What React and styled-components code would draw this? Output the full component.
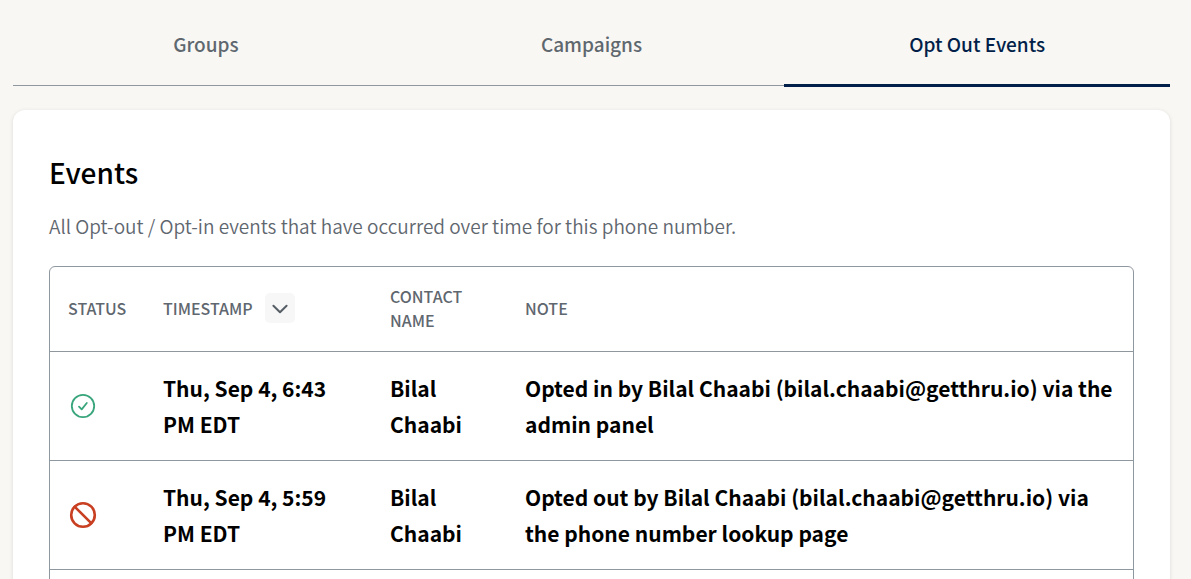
import React, { useState } from 'react';
import styled, { createGlobalStyle } from 'styled-components';

const tabs = ['Groups', 'Campaigns', 'Opt Out Events'];

const events = [
  {
    id: 1,
    optedIn: true,
    time: 'Thu, Sep 4, 6:43 PM EDT',
    contact: 'Bilal Chaabi',
    note: 'Opted in by Bilal Chaabi (bilal.chaabi@getthru.io) via the admin panel',
  },
  {
    id: 2,
    optedIn: false,
    time: 'Thu, Sep 4, 5:59 PM EDT',
    contact: 'Bilal Chaabi',
    note: 'Opted out by Bilal Chaabi (bilal.chaabi@getthru.io) via the phone number lookup page',
  },
];

const OptedInIcon = () => (
  <StatusIcon viewBox="0 0 30 30" role="img" aria-label="Opted in" $color="#38a57c">
    <circle cx="15" cy="15" r="11.2" strokeWidth="1.8" />
    <path d="M11 15.6l2.7 2.8 5.1-6.4" strokeWidth="1.8" />
  </StatusIcon>
);

const OptedOutIcon = () => (
  <StatusIcon viewBox="0 0 30 30" role="img" aria-label="Opted out" $color="#c93f22">
    <circle cx="15" cy="15" r="11.8" strokeWidth="2.6" />
    <path d="M6.8 6.8l16.4 16.4" strokeWidth="2.6" />
  </StatusIcon>
);

const App = () => {
  const [active, setActive] = useState('Opt Out Events');
  const [newestFirst, setNewestFirst] = useState(true);
  const rows = newestFirst ? events : [...events].reverse();

  return (
    <Page>
      <GlobalStyle />
      <TabList role="tablist">
        {tabs.map((tab) => (
          <Tab
            key={tab}
            type="button"
            role="tab"
            aria-selected={active === tab}
            $active={active === tab}
            onClick={() => setActive(tab)}
          >
            {tab}
          </Tab>
        ))}
      </TabList>
      <Card>
        <Title>Events</Title>
        <Description>
          All Opt-out / Opt-in events that have occurred over time for this phone number.
        </Description>
        <TableFrame>
          <Table>
            <colgroup>
              <Col $width="95px" />
              <Col $width="227px" />
              <Col $width="135px" />
              <Col />
            </colgroup>
            <thead>
              <tr>
                <HeadCell scope="col">Status</HeadCell>
                <HeadCell scope="col">
                  <SortLabel>
                    Timestamp
                    <SortButton
                      type="button"
                      aria-label="Sort by timestamp"
                      onClick={() => setNewestFirst(!newestFirst)}
                    >
                      <Chevron viewBox="0 0 18 18">
                        <path d="M2.4 6.8L9 13.2l6.6-6.4" />
                      </Chevron>
                    </SortButton>
                  </SortLabel>
                </HeadCell>
                <HeadCell scope="col">Contact Name</HeadCell>
                <HeadCell scope="col">Note</HeadCell>
              </tr>
            </thead>
            <tbody>
              {rows.map((event) => (
                <tr key={event.id}>
                  <Cell>{event.optedIn ? <OptedInIcon /> : <OptedOutIcon />}</Cell>
                  <Cell>{event.time}</Cell>
                  <Cell>{event.contact}</Cell>
                  <Cell>{event.note}</Cell>
                </tr>
              ))}
              <tr>
                <Cell colSpan={4} />
              </tr>
            </tbody>
          </Table>
        </TableFrame>
      </Card>
    </Page>
  );
};

export default App;

const GlobalStyle = createGlobalStyle`
  * {
    box-sizing: border-box;
  }
  body {
    margin: 0;
    background-color: #f8f7f3;
    color: #000;
    font-family: "Source Sans Pro", "Noto Sans CJK SC", "Open Sans", sans-serif;
  }
`;

const Page = styled.main`
  height: 100vh;
  padding: 0 21px 0 13px;
  overflow: hidden;
`;

const TabList = styled.div`
  display: grid;
  grid-template-columns: repeat(3, 1fr);
  margin-bottom: 24px;
  border-bottom: 1px solid #8f979f;
`;

const Tab = styled.button`
  padding: 29px 16px 26px;
  margin-bottom: -2px;
  border: none;
  border-bottom: 3px solid ${({ $active }) => ($active ? '#021f49' : 'transparent')};
  background: none;
  color: ${({ $active }) => ($active ? '#021f49' : '#5f676f')};
  font-family: inherit;
  font-size: 19px;
  font-weight: 500;
  line-height: 29px;
  cursor: pointer;
`;

const Card = styled.section`
  padding: 42px 36px;
  border-radius: 12px;
  background-color: #fff;
  box-shadow: 0 1px 4px rgba(0, 0, 0, 0.12);
`;

const Title = styled.h1`
  margin: 0 0 18px;
  font-size: 28px;
  font-weight: 500;
  line-height: 40px;
`;

const Description = styled.p`
  margin: 0 0 24px;
  color: #5f676f;
  font-size: 19px;
  font-weight: 350;
  line-height: 32px;
`;

const TableFrame = styled.div`
  border: 1px solid #8f979f;
  border-radius: 6px;
`;

const Table = styled.table`
  width: 100%;
  border-spacing: 0;
  table-layout: fixed;
`;

const Col = styled.col`
  width: ${({ $width }) => $width || 'auto'};
`;

const HeadCell = styled.th`
  padding: 17px 18px 19px;
  color: #5f676f;
  font-size: 16px;
  font-weight: 500;
  line-height: 24px;
  text-align: left;
  text-transform: uppercase;
`;

const Cell = styled.td`
  height: 109px;
  padding: 18px;
  border-top: 1px solid #8f979f;
  font-size: 21px;
  font-weight: 700;
  line-height: 36px;
`;

const SortLabel = styled.div`
  display: flex;
  align-items: center;
  gap: 12px;
`;

const SortButton = styled.button`
  display: flex;
  align-items: center;
  justify-content: center;
  width: 30px;
  height: 30px;
  padding: 0;
  border: none;
  border-radius: 5px;
  background-color: #f7f7f7;
  color: #555d65;
  cursor: pointer;
`;

const Chevron = styled.svg`
  width: 18px;
  height: 18px;
  fill: none;
  stroke: currentColor;
  stroke-width: 2;
  stroke-linecap: round;
  stroke-linejoin: round;
`;

const StatusIcon = styled.svg`
  display: block;
  width: 30px;
  height: 30px;
  fill: none;
  stroke: ${({ $color }) => $color};
  stroke-linecap: round;
  stroke-linejoin: round;
`;
